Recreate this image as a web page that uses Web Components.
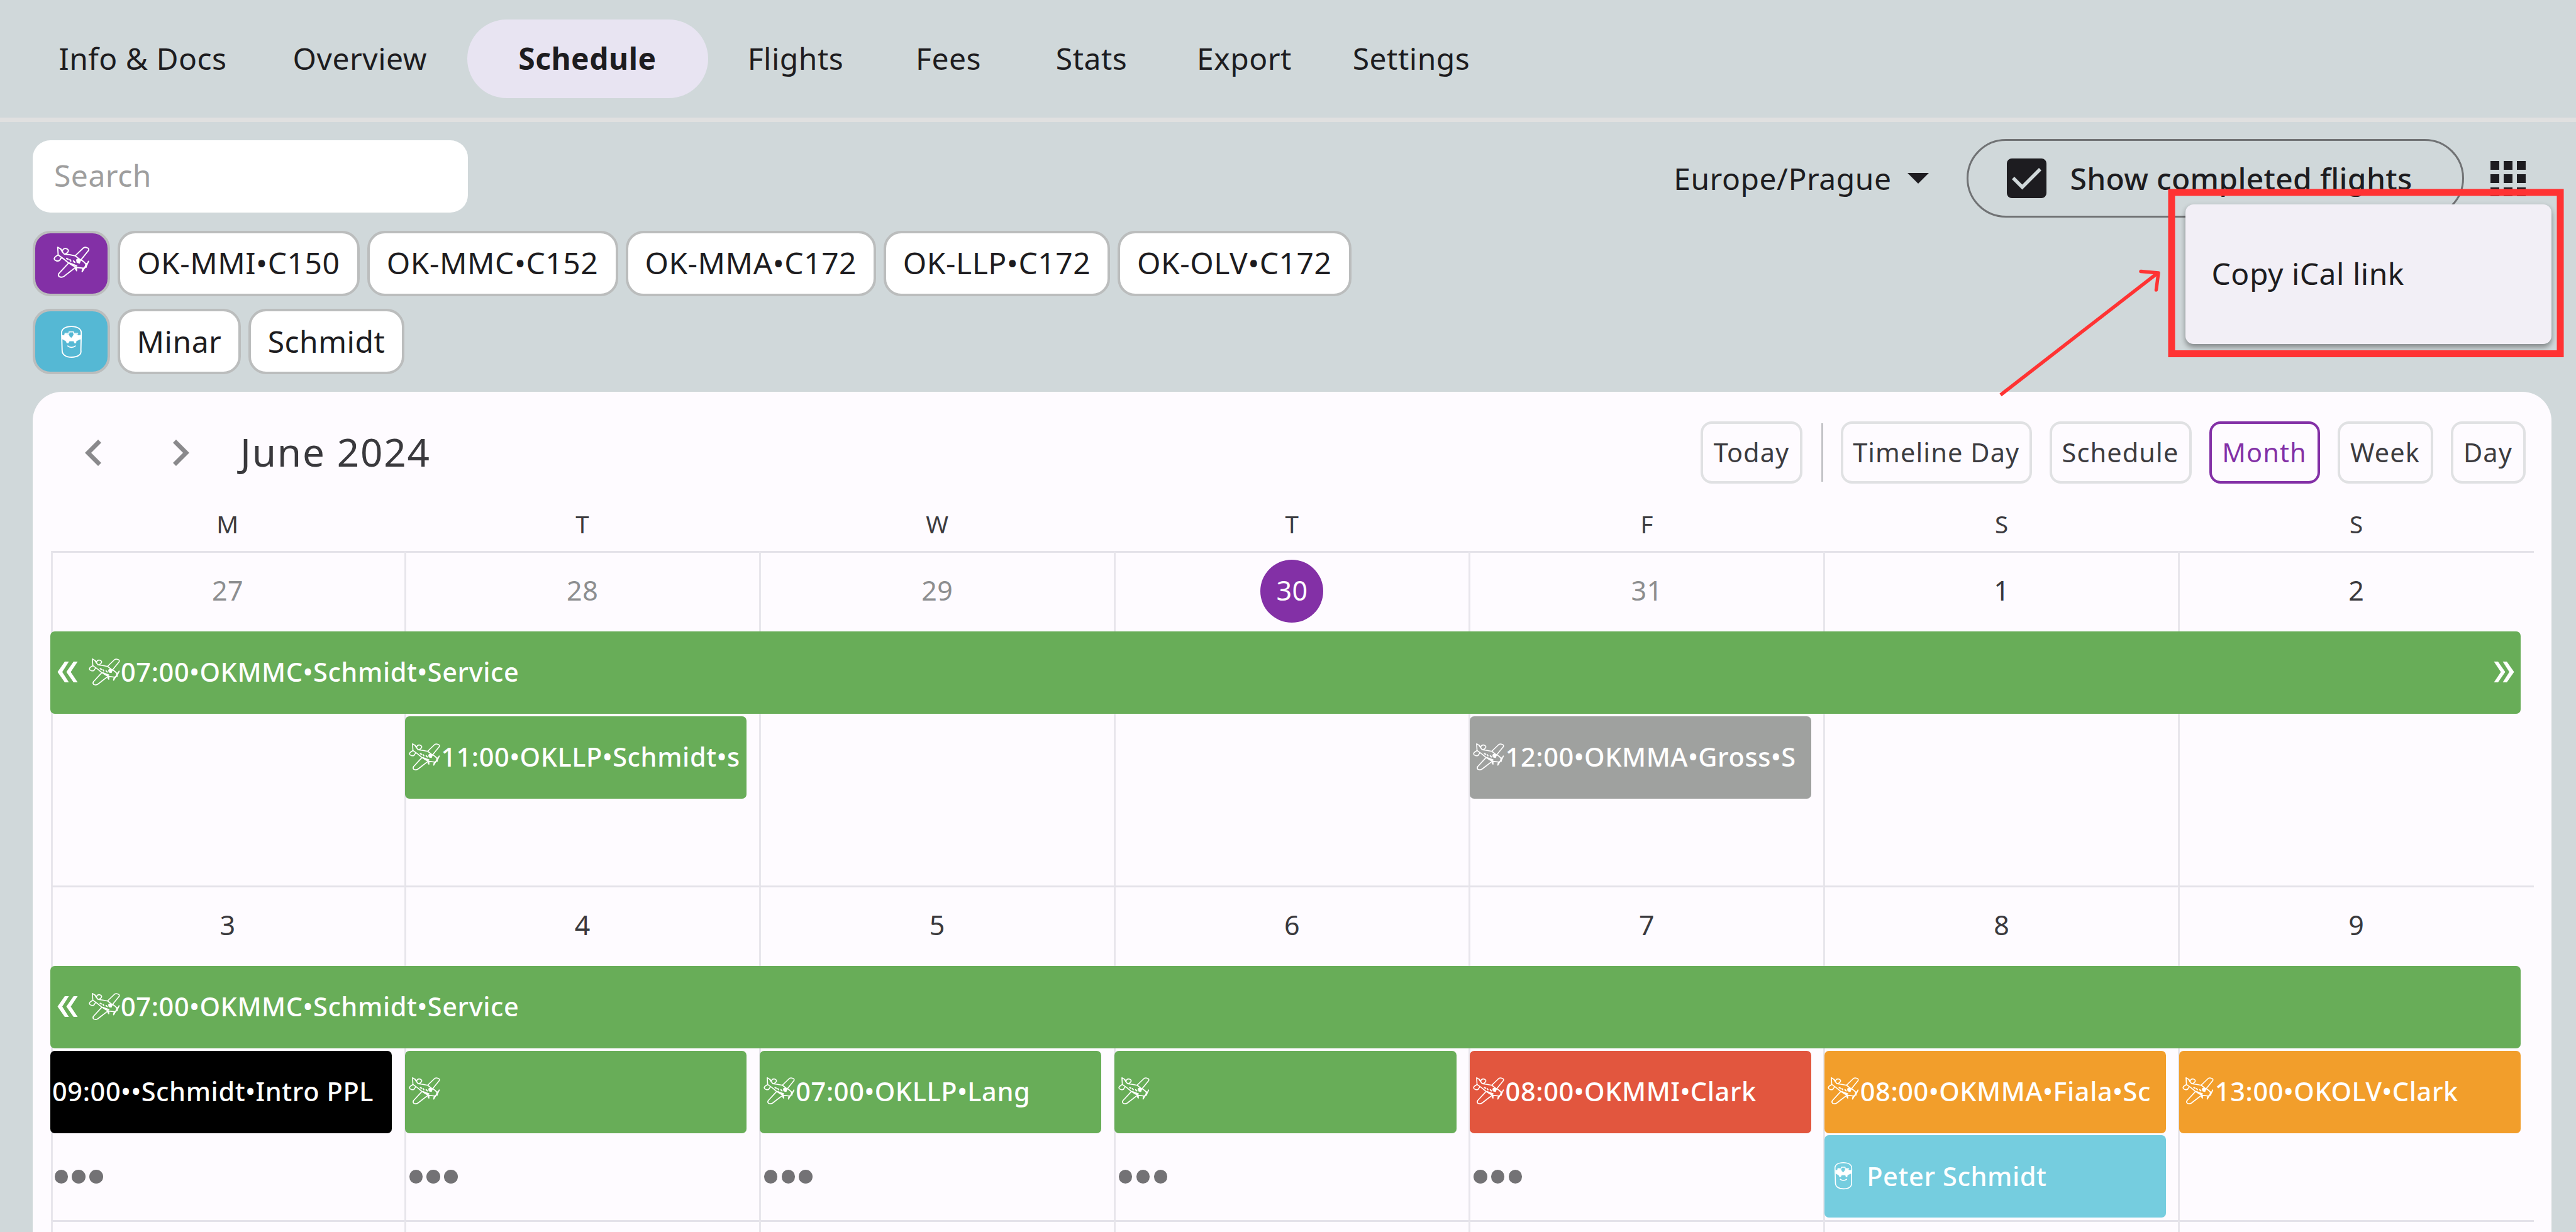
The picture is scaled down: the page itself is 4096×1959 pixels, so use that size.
<!DOCTYPE html>
<html lang="en">
<head>
<meta charset="utf-8">
<title>Schedule</title>
<style>
  html, body {
    margin: 0;
    width: 4096px;
    height: 1959px;
    overflow: hidden;
    background: #d0d8da;
    font-family: "Noto Sans", sans-serif;
    font-size: 48px;
    letter-spacing: 0.5px;
    color: #1d1c20;
  }
</style>
</head>
<body>
<schedule-app></schedule-app>

<script>
const PLANE = `
  <svg viewBox="205 162 315 275" fill="none" stroke="currentColor" stroke-width="10" stroke-linejoin="round" stroke-linecap="round">
    <path d="M250 238L246 173L270 187Q282 212 302 231Q345 235 395 246L430 274Q468 292 483 315Q481 342 462 350L405 343Q370 330 337 305Q300 272 250 238"/>
    <path d="M250 238C232 248 214 258 217 271C222 290 248 292 262 284Q268 272 280 260"/>
    <path d="M286 212C283 194 300 180 318 185C334 190 341 201 332 213Q320 229 306 230M270 187L286 202"/>
    <path d="M395 243L462 179Q476 170 492 177Q513 182 506 200L446 274"/>
    <path d="M336 308L256 394Q246 410 259 421Q280 431 300 417L392 346"/>
    <path d="M505 292L486 333L468 352L452 379M486 310L486 340" stroke-width="11"/>
    <path d="M405 345L405 371M397 345L397 362M458 352L452 374"/>
    <path d="M322 268L334 274M349 278L356 289M379 289L390 300M345 307L405 330" stroke-width="12"/>
    <path d="M404 278L424 268L440 282L430 308L408 302Z" fill="currentColor" stroke-width="6"/>
  </svg>`;

const HELMET = `
  <svg viewBox="264 820 196 280" fill="none" stroke="currentColor" stroke-width="10" stroke-linejoin="round" stroke-linecap="round">
    <path d="M280 895C274 850 312 831 362 831C412 831 450 850 445 895L442 1030C450 1068 414 1090 364 1090C318 1090 283 1070 284 1030Z"/>
    <path d="M284 905L302 906L306 892L338 896L346 915L361 928L375 912L384 892L412 896L420 906L441 905L441 936L403 954L400 971L388 971L382 954L346 954L336 971L324 971L316 954L284 936Z" fill="currentColor" stroke-width="3"/>
    <path d="M308 888L342 888L342 876L380 876L380 888L416 888" stroke-width="8"/>
    <path d="M332 995Q345 1007 362 1007Q382 1007 395 995" stroke-width="9"/>
  </svg>`;

class NavTab extends HTMLElement {
  constructor() {
    super();
    this.attachShadow({ mode: 'open' });
    this.shadowRoot.innerHTML = `
    <style>
      :host {
        display: flex;
        justify-content: center;
        align-items: center;
        box-sizing: border-box;
        height: 125px;
        padding-bottom: 3px;
        border-radius: 63px;
        white-space: nowrap;
      }
      :host([selected]) {
        background: #e8e4f2;
        font-weight: 700;
      }
    </style>
    <slot></slot>`;
  }
}
customElements.define('nav-tab', NavTab);

class FilterChip extends HTMLElement {
  constructor() {
    super();
    this.attachShadow({ mode: 'open' });
    this.shadowRoot.innerHTML = `
    <style>
      :host {
        display: flex;
        justify-content: center;
        align-items: center;
        box-sizing: border-box;
        height: 104px;
        padding-bottom: 2px;
        border: 4px solid #bbbdbd;
        border-radius: 28px;
        background: #fff;
        white-space: nowrap;
      }
      :host([kind]) {
        width: 123px;
        padding: 0;
        color: #fff;
      }
      :host([kind="plane"]) { background: #8330a6; }
      :host([kind="pilot"]) { background: #55b8d4; }
      svg { display: block; }
      :host([kind="plane"]) svg { width: 59.5px; height: 52px; margin: 0 0 4px 0; }
      :host([kind="pilot"]) svg { width: 37px; height: 53px; }
    </style>
    <slot></slot>`;
    const kind = this.getAttribute('kind');
    if (kind) {
      this.shadowRoot.innerHTML += kind === 'plane' ? PLANE : HELMET;
    }
  }
}
customElements.define('filter-chip', FilterChip);

class ViewButton extends HTMLElement {
  constructor() {
    super();
    this.attachShadow({ mode: 'open' });
    this.shadowRoot.innerHTML = `
    <style>
      :host {
        display: flex;
        justify-content: center;
        align-items: center;
        box-sizing: border-box;
        height: 99px;
        padding-bottom: 1px;
        border: 4px solid #e0e1e3;
        border-radius: 18px;
        font-size: 41.5px;
        letter-spacing: 1.1px;
        color: #3c3b3f;
        white-space: nowrap;
      }
      :host([active]) {
        border-color: #8330a6;
        color: #8330a6;
      }
    </style>
    <slot></slot>`;
  }
}
customElements.define('view-button', ViewButton);

class CalendarEvent extends HTMLElement {
  constructor() {
    super();
    this.attachShadow({ mode: 'open' });
    const icon = this.getAttribute('icon');
    this.shadowRoot.innerHTML = `
    <style>
      :host {
        display: flex;
        align-items: center;
        box-sizing: border-box;
        height: 131px;
        margin-right: 21px;
        padding: 0 5px 2.5px 4.5px;
        border-radius: 7px;
        background: #68ad58;
        color: #fff;
        font-size: 41.5px;
        font-weight: 500;
        letter-spacing: 0.6px;
        line-height: 56px;
        white-space: nowrap;
        overflow: hidden;
      }
      :host(:not([icon])) { padding-left: 3px; }
      :host([color="gray"]) { background: #9fa19f; }
      :host([color="black"]) { background: #000; }
      :host([color="red"]) { background: #e2563e; }
      :host([color="orange"]) { background: #f29e2b; }
      :host([color="cyan"]) { background: #75cddf; }
      svg { flex: none; display: block; }
      .plane svg { width: 52px; height: 45px; margin-right: 0.5px; }
      .pilot svg { width: 32px; height: 45px; margin: 0 21px 0 10px; }
      .more { width: 33px; height: 33px; }
      .before { margin: 0 16px 0 6px; }
      .after { margin-left: auto; margin-right: 5px; }
    </style>
    ${this.hasAttribute('before') ? '<svg class="more before" viewBox="0 0 33 33" fill="#fff"><path d="M12 0h6.500L8 16.500L18.500 33h-6.500L0.500 16.500ZM26 0h6.500L21.500 16.500L32.500 33h-6.500L14.500 16.500Z"/></svg>' : ''}
    ${icon ? `<span class="${icon}">${icon === 'plane' ? PLANE : HELMET}</span>` : ''}
    <slot></slot>
    ${this.hasAttribute('after') ? '<svg class="more after" viewBox="0 0 33 33" fill="#fff"><path d="M21 0h-6.500L25 16.500L14.500 33h6.500L32.500 16.500ZM7 0h-6.500L11.500 16.500L0.500 33h6.500L18.500 16.500Z"/></svg>' : ''}`;
  }
}
customElements.define('calendar-event', CalendarEvent);

class MoreDots extends HTMLElement {
  constructor() {
    super();
    this.attachShadow({ mode: 'open' });
    this.shadowRoot.innerHTML = `
    <style>
      :host {
        display: flex;
        gap: 6.3px;
        align-items: center;
        height: 131px;
        padding-left: 6.5px;
      }
      i {
        width: 21.5px;
        height: 21.5px;
        border-radius: 50%;
        background: #737275;
      }
    </style>
    <i></i><i></i><i></i>`;
  }
}
customElements.define('more-dots', MoreDots);

class CalendarWeek extends HTMLElement {
  constructor() {
    super();
    this.attachShadow({ mode: 'open' });
    const dates = (this.getAttribute('dates') || ',,,,,,').split(',');
    const today = this.getAttribute('today');
    const muted = (this.getAttribute('muted') || '').split(',');
    const cells = dates.map((d, i) => `<div class="cell" style="grid-area: 1 / ${i + 1} / -1 / auto"></div>`);
    const labels = dates.map((d, i) => {
      const cls = d && d === today ? 'today' : muted.includes(d) ? 'muted' : '';
      return `<div class="date" style="grid-area: 1 / ${i + 1}"><span class="${cls}">${d}</span></div>`;
    });
    this.shadowRoot.innerHTML = `
    <style>
      :host {
        display: grid;
        grid-template-columns: repeat(7, 564.15px);
        grid-template-rows: 126.800px repeat(3, 134.700px);
        flex: none;
        height: 531.900px;
      }
      /* lines are centred on the cell boundaries */
      .cell {
        box-sizing: border-box;
        margin: -1.500px 0 0 -1.500px;
        border-top: 3px solid #e4e2e9;
        border-left: 3px solid #e8e6ec;
      }
      .cell:first-of-type { margin-left: 0.500px; }
      .date {
        display: flex;
        justify-content: center;
        padding-top: 13px;
        font-size: 43px;
        letter-spacing: 0.5px;
        line-height: 98px;
        color: #3a393d;
      }
      .date span {
        width: 100px;
        height: 100px;
        text-align: center;
      }
      .date .muted { color: #8d8e90; }
      .date .today {
        border-radius: 50%;
        background: #8330a6;
        color: #fff;
      }
    </style>
    ${cells.join('')}
    ${labels.join('')}
    <slot></slot>`;
  }
}
customElements.define('calendar-week', CalendarWeek);

class MonthCalendar extends HTMLElement {
  constructor() {
    super();
    this.attachShadow({ mode: 'open' });
    this.shadowRoot.innerHTML = `
    <style>
      :host {
        display: flex;
        flex-direction: column;
        box-sizing: border-box;
        height: 1336px;
        padding-left: 28px;
        border-radius: 46px 46px 0 0;
        background: #fefbff;
        overflow: hidden;
      }
      header {
        display: flex;
        align-items: center;
        height: 99px;
        margin: 47px 41px 0 0;
      }
      .arrow {
        width: 26px;
        height: 42px;
        margin-left: 55px;
      }
      .arrow + .arrow { margin-left: 114px; }
      h1 {
        flex: 1;
        margin: 0 0 4px 81px;
        font-size: 62px;
        font-weight: 400;
        letter-spacing: 1.8px;
        color: #3a393d;
      }
      .views { display: flex; align-items: center; gap: 28px; }
      .rule { width: 3px; height: 93px; background: #c4c4c8; margin: 0 0 0 2px; }
      .days {
        display: grid;
        grid-template-columns: repeat(7, 564.15px);
        height: 108.300px;
        font-size: 38.500px;
        line-height: 128px;
        text-align: center;
        color: #3c3b3f;
      }
    </style>
    <header>
      <svg class="arrow" viewBox="0 0 26 42" fill="none" stroke="#8a898c" stroke-width="7"><path d="M23.500 2.500L5 21L23.500 39.500"/></svg>
      <svg class="arrow" viewBox="0 0 26 42" fill="none" stroke="#8a898c" stroke-width="7"><path d="M2.500 2.500L21 21L2.500 39.500"/></svg>
      <h1>June 2024</h1>
      <div class="views">
        <view-button style="width: 162px">Today</view-button>
        <div class="rule"></div>
        <view-button style="width: 303.500px">Timeline Day</view-button>
        <view-button style="width: 226px">Schedule</view-button>
        <view-button style="width: 176px" active>Month</view-button>
        <view-button style="width: 152px">Week</view-button>
        <view-button style="width: 119px">Day</view-button>
      </div>
    </header>
    <div class="days">
      <span>M</span><span>T</span><span>W</span><span>T</span><span>F</span><span>S</span><span>S</span>
    </div>
    <calendar-week dates="27,28,29,30,31,1,2" today="30" muted="27,28,29,31">
      <calendar-event icon="plane" before after style="grid-area: 2 / 1 / auto / 8">07:00•OKMMC•Schmidt•Service</calendar-event>
      <calendar-event icon="plane" style="grid-area: 3 / 2">11:00•OKLLP•Schmidt•s</calendar-event>
      <calendar-event icon="plane" color="gray" style="grid-area: 3 / 5">12:00•OKMMA•Gross•S</calendar-event>
    </calendar-week>
    <calendar-week dates="3,4,5,6,7,8,9">
      <calendar-event icon="plane" before style="grid-area: 2 / 1 / auto / 8">07:00•OKMMC•Schmidt•Service</calendar-event>
      <calendar-event color="black" style="grid-area: 3 / 1">09:00••Schmidt•Intro PPL</calendar-event>
      <calendar-event icon="plane" style="grid-area: 3 / 2"></calendar-event>
      <calendar-event icon="plane" style="grid-area: 3 / 3">07:00•OKLLP•Lang</calendar-event>
      <calendar-event icon="plane" style="grid-area: 3 / 4"></calendar-event>
      <calendar-event icon="plane" color="red" style="grid-area: 3 / 5">08:00•OKMMI•Clark</calendar-event>
      <calendar-event icon="plane" color="orange" style="grid-area: 3 / 6">08:00•OKMMA•Fiala•Sc</calendar-event>
      <calendar-event icon="plane" color="orange" style="grid-area: 3 / 7">13:00•OKOLV•Clark</calendar-event>
      <more-dots style="grid-area: 4 / 1"></more-dots>
      <more-dots style="grid-area: 4 / 2"></more-dots>
      <more-dots style="grid-area: 4 / 3"></more-dots>
      <more-dots style="grid-area: 4 / 4"></more-dots>
      <more-dots style="grid-area: 4 / 5"></more-dots>
      <calendar-event icon="pilot" color="cyan" style="grid-area: 4 / 6">Peter Schmidt</calendar-event>
    </calendar-week>
    <calendar-week></calendar-week>`;
  }
}
customElements.define('month-calendar', MonthCalendar);

class PopupMenu extends HTMLElement {
  constructor() {
    super();
    this.attachShadow({ mode: 'open' });
    this.shadowRoot.innerHTML = `
    <style>
      :host {
        position: absolute;
        left: 3475px;
        top: 325px;
        display: flex;
        align-items: center;
        box-sizing: border-box;
        width: 581.5px;
        height: 222px;
        padding: 0 0 3px 41.5px;
        border-radius: 13px;
        background: #f2eff6;
        box-shadow: 0 6px 8px rgba(0, 0, 0, 0.28), 0 2px 8px rgba(0, 0, 0, 0.14);
      }
    </style>
    <slot></slot>`;
  }
}
customElements.define('popup-menu', PopupMenu);

class CalloutArrow extends HTMLElement {
  constructor() {
    super();
    this.attachShadow({ mode: 'open' });
    this.shadowRoot.innerHTML = `
    <style>
      :host {
        position: absolute;
        left: 3170px;
        top: 300px;
        width: 907px;
        height: 340px;
      }
      svg { display: block; }
    </style>
    <svg width="907" height="340" viewBox="3170 300 907 340" fill="none" stroke="#ff3333" stroke-width="5.500">
      <rect x="3453" y="306" width="618" height="256.500" stroke-width="11"/>
      <path d="M3181 628L3431 434"/>
      <path d="M3404 431.500L3432 434L3428.500 461" stroke-linecap="round" stroke-linejoin="round"/>
    </svg>`;
  }
}
customElements.define('callout-arrow', CalloutArrow);

class ScheduleApp extends HTMLElement {
  constructor() {
    super();
    this.attachShadow({ mode: 'open' });
    this.shadowRoot.innerHTML = `
    <style>
      :host {
        display: block;
        position: relative;
        width: 4096px;
        height: 1959px;
        overflow: hidden;
      }
      nav {
        display: flex;
        height: 156px;
        padding: 31px 0 0 52px;
        border-bottom: 7px solid #e0e0e0;
      }
      main { padding: 27px 39.500px 0 52px; }
      .bar {
        display: flex;
        align-items: center;
        height: 125px;
      }
      .search {
        box-sizing: border-box;
        width: 692px;
        height: 115px;
        margin-bottom: 6px;
        padding: 0 34px 3px;
        border-radius: 28px;
        background: #fff;
        color: #9e9e9e;
        line-height: 111px;
      }
      .zone { margin: 0 25px 0 auto; }
      .done {
        display: flex;
        align-items: center;
        box-sizing: border-box;
        width: 791px;
        height: 125px;
        margin: 0 42px 0 60px;
        padding-left: 61px;
        border: 3.5px solid #707274;
        border-radius: 63px;
        font-weight: 500;
        letter-spacing: 0.3px;
      }
      .done svg { margin-right: 38px; }
      .grid { margin: 0 41px 0 0; }
      .chips {
        display: flex;
        gap: 12px;
        margin-top: 20.500px;
        height: 104px;
      }
      month-calendar { margin-top: 28px; }
    </style>
    <nav>
      <nav-tab style="width: 350px">Info &amp; Docs</nav-tab>
      <nav-tab style="width: 340.500px">Overview</nav-tab>
      <nav-tab style="width: 383px" selected>Schedule</nav-tab>
      <nav-tab style="width: 279px">Flights</nav-tab>
      <nav-tab style="width: 207px">Fees</nav-tab>
      <nav-tab style="width: 248px">Stats</nav-tab>
      <nav-tab style="width: 238px">Export</nav-tab>
      <nav-tab style="width: 293px">Settings</nav-tab>
    </nav>
    <main>
      <div class="bar">
        <div class="search">Search</div>
        <span class="zone">Europe/Prague</span>
        <svg width="34" height="17" viewBox="0 0 34 17"><path d="M0 0H34L17 17Z" fill="#1d1c20"/></svg>
        <div class="done">
          <svg width="63" height="63" viewBox="0 0 63 63"><rect width="63" height="63" rx="8" fill="#1d1c20"/><path d="M10 31L24.500 45.500L53 17" fill="none" stroke="#d0d8da" stroke-width="5.500"/></svg>
          Show completed flights
        </div>
        <svg class="grid" width="56" height="56" viewBox="0 0 56 56" fill="#1d1c20"><path d="M0 0h14v14H0zM21 0h14v14H21zM42 0h14v14H42zM0 21h14v14H0zM21 21h14v14H21zM42 21h14v14H42zM0 42h14v14H0zM21 42h14v14H21zM42 42h14v14H42z"/></svg>
      </div>
      <div class="chips">
        <filter-chip kind="plane"></filter-chip>
        <filter-chip style="width: 384.500px">OK-MMI•C150</filter-chip>
        <filter-chip style="width: 399px">OK-MMC•C152</filter-chip>
        <filter-chip style="width: 398.500px">OK-MMA•C172</filter-chip>
        <filter-chip style="width: 360px">OK-LLP•C172</filter-chip>
        <filter-chip style="width: 371.500px">OK-OLV•C172</filter-chip>
      </div>
      <div class="chips">
        <filter-chip kind="pilot"></filter-chip>
        <filter-chip style="width: 196px">Minar</filter-chip>
        <filter-chip style="width: 248px">Schmidt</filter-chip>
      </div>
      <month-calendar></month-calendar>
    </main>
    <popup-menu>Copy iCal link</popup-menu>
    <callout-arrow></callout-arrow>`;
  }
}
customElements.define('schedule-app', ScheduleApp);
</script>
</body>
</html>
